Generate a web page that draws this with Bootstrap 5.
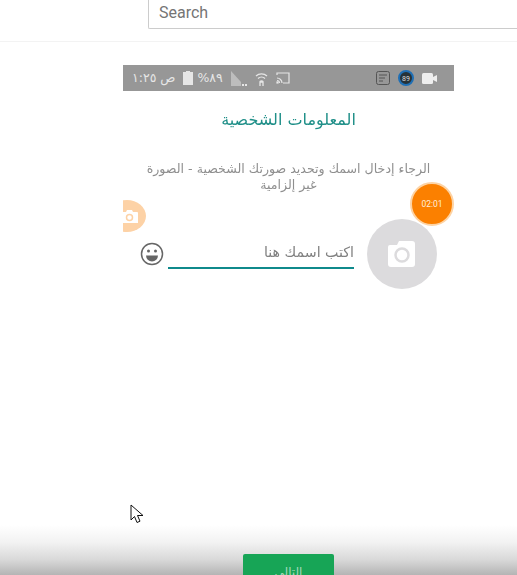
<!DOCTYPE html>
<html lang="ar">
<head>
  <meta charset="UTF-8">
  <title>المعلومات الشخصية</title>
  <meta name="viewport" content="width=device-width, initial-scale=1">
  <link href="https://cdn.jsdelivr.net/npm/bootstrap@5.3.0/dist/css/bootstrap.min.css" rel="stylesheet">
  <style>
    html, body { height: 575px; overflow: hidden; background: #fff; }
    body { font-family: "DejaVu Sans", sans-serif; position: relative; }
    .top-head { height: 42px; border-bottom: 1px solid #f3f3f3; padding-left: 148px; }
    .search-box { height: 29px; width: 369px; border: 1px solid #ccc; border-top: 0; border-right: 0; border-radius: 0 0 0 2px; padding: 0 10px 3px; font: 16px Roboto, sans-serif; }
    .search-box::placeholder { color: #757575; }
    .phone { width: 331px; margin: 23px 0 0 123px; position: relative; height: 300px; overflow: hidden; filter: blur(.4px); }
    .status-bar { height: 26px; background: #979797; color: #e6e6e6; padding: 0 17px 0 9px; font-size: 12.500px; }
    .status-bar svg { display: block; }
    .page-title { color: #1f8f88; font-size: 16px; font-weight: 400; text-align: center; margin: 19px 0 0; line-height: 20px; }
    .hint { color: #8f8f8f; font-size: 12.600px; line-height: 16px; text-align: center; margin: 31px 5px 0; }
    .name-row { margin-top: 26px; padding: 0 17px; }
    .avatar { width: 70px; height: 70px; border-radius: 50%; background: #dcdbdd; flex: none; }
    .name-line { width: 186px; height: 36px; border-bottom: 2px solid #0f8a8c; margin: 14px 13px 0 0; color: #808080; font-size: 14.200px; line-height: 39px; text-align: right; }
    .timer { position: absolute; left: 287px; top: 117px; width: 44px; height: 44px; border-radius: 50%; background: #fb8000; border: 2px solid #fdd3a4; color: #ffeedd; font: 8.500px/40px Roboto, sans-serif; text-align: center; }
    .ghost-cam { position: absolute; left: -15px; top: 135px; width: 38px; height: 32px; border-radius: 50%; background: #fdd2a6; }
    .pointer { position: absolute; left: 130px; top: 504px; }
    .foot-shade { position: absolute; left: 0; right: 0; bottom: 0; height: 50px; background: linear-gradient(#fff, #f2f2f2 35%, #d8d8d8 70%, #b4b4b4); }
    .next-btn { position: absolute; left: 243px; top: 29px; width: 91px; height: 30px; border: 0; border-radius: 2px; background: #17a556; color: #a5d9b8; font-size: 12px; padding: 6px 0 0; line-height: 18px; }
  </style>
</head>
<body>
  <header class="top-head">
    <input class="form-control search-box" type="text" placeholder="Search" dir="ltr">
  </header>

  <section class="phone">
    <div class="status-bar d-flex align-items-center" dir="ltr">
      <span class="time-txt">ص ١:٢٥</span>
      <svg class="ms-2" width="10" height="14" viewBox="0 0 10 14"><path d="M3 0h4v1h3v13H0V1h3z" fill="#e6e6e6"/></svg>
      <span class="ms-1">%٨٩</span>
      <svg class="ms-2" width="16" height="15" viewBox="0 0 16 15"><path d="M0 15V0l10 11v4z" fill="#bdbdbd"/><path d="M11 13h2v2h-2zm3 0h2v2h-2z" fill="#e6e6e6"/></svg>
      <svg class="ms-2" width="13" height="15" viewBox="0 0 13 15" fill="none" stroke="#e6e6e6" stroke-width="1.3"><path d="M1 5a8 8 0 0 1 11 0M3 7.500a5 5 0 0 1 7 0"/><path d="M5 15v-4h3v4M5 10.500a2 2 0 0 1 3 0"/></svg>
      <svg class="ms-2" width="14" height="12" viewBox="0 0 14 12" fill="none" stroke="#e6e6e6" stroke-width="1.200"><path d="M1 3V1h12v10H7"/><path d="M1 6a5 5 0 0 1 5 5M1 8.500A2.500 2.500 0 0 1 3.500 11"/><path d="M1 10h1v1H1z"/></svg>
      <svg class="ms-auto" width="14" height="14" viewBox="0 0 14 14" fill="none" stroke="#555" stroke-width="1"><rect x=".5" y=".5" width="13" height="13" rx="2"/><path d="M3 4h8M3 7h6M3 10h4"/></svg>
      <svg class="ms-2" width="16" height="16" viewBox="0 0 16 16"><circle cx="8" cy="8" r="7" fill="#263238" stroke="#1f6fb5" stroke-width="2"/><text x="8" y="10.500" font-size="7" fill="#ddd" text-anchor="middle" font-family="Roboto">89</text></svg>
      <svg class="ms-2" width="15" height="11" viewBox="0 0 15 11"><rect width="11" height="11" rx="1.500" fill="#eee"/><path d="M11 4l4-2v7l-4-2z" fill="#eee"/></svg>
    </div>

    <h1 class="page-title">المعلومات الشخصية</h1>
    <p class="hint">الرجاء إدخال اسمك وتحديد صورتك الشخصية - الصورة<br>غير إلزامية</p>

    <div class="name-row d-flex flex-row-reverse align-items-start">
      <div class="avatar d-flex align-items-center justify-content-center">
        <svg width="28" height="26" viewBox="0 0 28 26"><path d="M2 4h7l2-4h13a3 3 0 0 1 3 3v20a3 3 0 0 1-3 3H3a3 3 0 0 1-3-3V6a2 2 0 0 1 2-2z" fill="#fff"/><circle cx="14" cy="14" r="6.500" fill="none" stroke="#dcdbdd" stroke-width="2.500"/></svg>
      </div>
      <div class="name-line">اكتب اسمك هنا</div>
      <svg class="me-1 emoji-ico" width="24" height="24" viewBox="0 0 24 24" fill="none" stroke="#666" stroke-width="1.500" style="margin-top:23px"><circle cx="12" cy="12" r="10.500"/><circle cx="8.500" cy="9" r="1.500" fill="#666" stroke="none"/><circle cx="15.500" cy="9" r="1.500" fill="#666" stroke="none"/><path d="M6 13.500h12a6 6 0 0 1-12 0z" fill="#666" stroke="none"/></svg>
    </div>

    <div class="ghost-cam d-flex align-items-center justify-content-end">
      <svg class="me-2" width="17" height="15" viewBox="0 0 17 15"><path d="M1 3h4l1-2h5l1 2h4a1 1 0 0 1 1 1v10H0V4a1 1 0 0 1 1-1z" fill="#fff"/><circle cx="8.500" cy="8.500" r="3" fill="none" stroke="#fdd2a6" stroke-width="1.500"/></svg>
    </div>
    <div class="timer">02:01</div>
  </section>

  <footer class="foot-shade">
    <button class="next-btn" type="button">التالي</button>
  </footer>

  <svg class="pointer" width="14" height="20" viewBox="0 0 14 20"><path d="M1 1v15l3.500-3.500 2.500 6 3-1.300-2.500-5.700H13z" fill="#fff" stroke="#111" stroke-width="1"/></svg>

  <script src="https://cdn.jsdelivr.net/npm/bootstrap@5.3.0/dist/js/bootstrap.bundle.min.js"></script>
</body>
</html>
